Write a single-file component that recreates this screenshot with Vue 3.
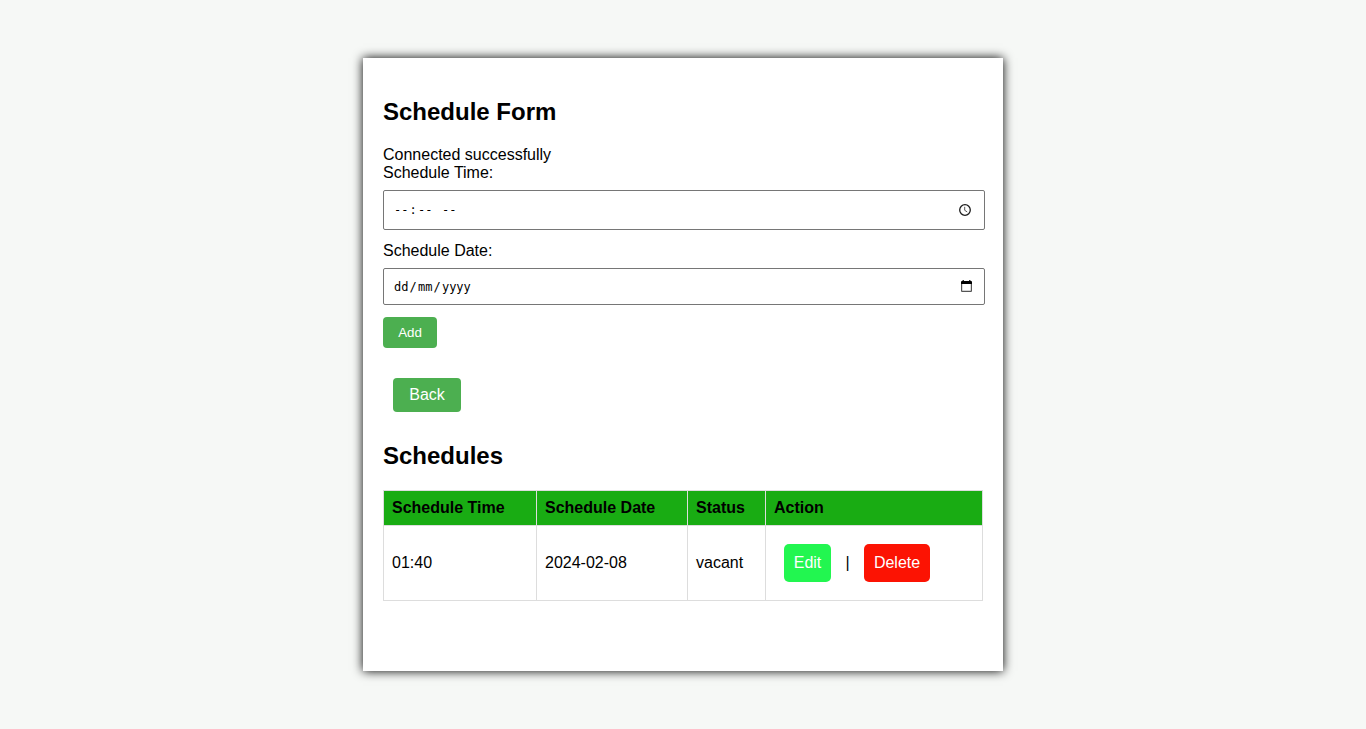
<script setup>
const schedules = [{ time: '01:40', date: '2024-02-08', status: 'vacant' }]
</script>

<template>
  <main class="page">
    <section class="card">
      <h2>Schedule Form</h2>
      <form @submit.prevent>
        <div class="line">Connected successfully</div>
        <div class="line">Schedule Time:</div>
        <div class="field time" tabindex="0">
          <span class="value"><span>--</span><i>:</i><span>--</span><i class="gap"></i><span>--</span></span>
          <svg class="clock" width="12" height="12" viewBox="0 0 12 12">
            <circle cx="6" cy="6" r="5.3" fill="none" stroke="#1c1c1c" stroke-width="1.3" />
            <path d="M5.7 2.8v3.5l2.5 1.6" fill="none" stroke="#444" stroke-width="0.9" />
          </svg>
        </div>
        <div class="line">Schedule Date:</div>
        <div class="field date" tabindex="0">
          <span class="value"><span>dd</span><i>/</i><span>mm</span><i>/</i><span>yyyy</span></span>
          <svg class="calendar" width="11" height="12" viewBox="0 0 11 12">
            <rect x="0.6" y="3.5" width="9.8" height="7.9" rx="0.5" fill="none" stroke="#555" stroke-width="1.2" />
            <path d="M1.6 0h1.2v1h5.4V0h1.2v1h.6a1 1 0 0 1 1 1v2H0V2a1 1 0 0 1 1-1h.6z" fill="#000" />
          </svg>
        </div>
        <button class="add" type="submit">Add</button>
      </form>
      <a class="back">Back</a>
      <h2 class="list-title">Schedules</h2>
      <table>
        <colgroup><col class="c1" /><col class="c2" /><col class="c3" /><col /></colgroup>
        <thead>
          <tr><th>Schedule Time</th><th>Schedule Date</th><th>Status</th><th>Action</th></tr>
        </thead>
        <tbody>
          <tr v-for="s in schedules" :key="s.date">
            <td>{{ s.time }}</td>
            <td>{{ s.date }}</td>
            <td>{{ s.status }}</td>
            <td>
              <div class="actions"><a class="edit">Edit</a><span class="bar">|</span><a class="delete">Delete</a></div>
            </td>
          </tr>
        </tbody>
      </table>
    </section>
  </main>
</template>

<style>
body {
  background: #f6f8f6;
}
</style>

<style scoped>
.page {
  box-sizing: border-box;
  height: 729px;
  padding-top: 58px;
  font: 16px/18px "Liberation Sans", Arial, sans-serif;
  color: #000;
  overflow: hidden;
}
.card {
  box-sizing: border-box;
  width: 640px;
  height: 613px;
  margin: 0 auto;
  padding: 40px 20px 0;
  background: #fff;
  box-shadow: 0 0 10px #000;
}
h2 {
  margin: 0 0 20px;
  font-size: 24px;
  line-height: 28px;
  font-weight: bold;
}
.field {
  box-sizing: border-box;
  display: flex;
  align-items: center;
  justify-content: space-between;
  width: 602px;
  border: 1px solid #767676;
  border-radius: 2px;
  padding: 0 12px 0 10px;
}
.time {
  height: 40px;
  margin: 8px 0 12px;
}
.date {
  height: 37px;
  margin: 8px 0 12px;
}
.date .value {
  padding-top: 2px;
}
.clock {
  margin-right: 1px;
}
.calendar {
  margin-bottom: 1px;
}
.value {
  display: flex;
  font: 12px/15px "DejaVu Sans Mono", monospace;
}
.value i {
  width: 9.5px;
  text-align: center;
  font-style: normal;
}
.add {
  display: block;
  width: 54px;
  height: 31px;
  padding: 0;
  border: 0;
  border-radius: 4px;
  background: #4caf50;
  color: #fff;
  font: 13.333px "Liberation Sans", Arial, sans-serif;
}
.back {
  display: block;
  box-sizing: border-box;
  width: 68px;
  height: 34px;
  margin: 30px 0 30px 10px;
  padding-top: 8px;
  border-radius: 4px;
  background: #4caf50;
  color: #fff;
  text-align: center;
}
table {
  width: 600px;
  table-layout: fixed;
  border-collapse: collapse;
}
.c1 { width: 153px; }
.c2 { width: 151px; }
.c3 { width: 78px; }
th,
td {
  border: 1px solid #ddd;
  padding: 8px;
  text-align: left;
}
th {
  background: #19ac13;
  height: 18px;
}
td {
  height: 58px;
}
.actions {
  display: flex;
  align-items: center;
  padding-left: 10px;
}
.edit,
.delete {
  box-sizing: border-box;
  height: 38px;
  padding: 10px 0;
  border-radius: 5px;
  color: #fff;
  text-align: center;
}
.edit {
  width: 47px;
  background: #22f650;
}
.delete {
  width: 66px;
  background: #fc1303;
}
.bar {
  width: 33px;
  text-align: center;
}
</style>
